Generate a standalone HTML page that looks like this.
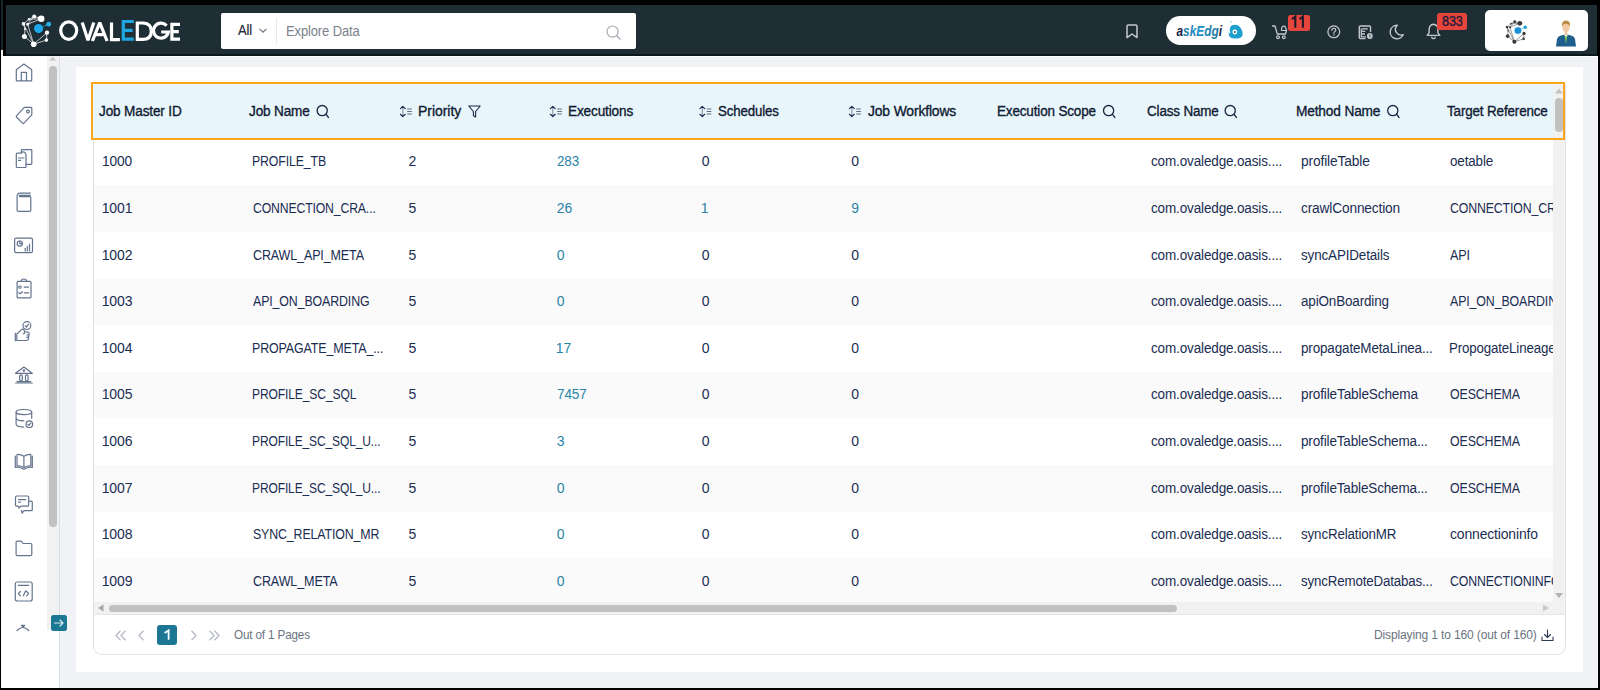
<!DOCTYPE html><html><head><meta charset="utf-8"><title>OvalEdge Jobs</title><style>
*{box-sizing:border-box;margin:0;padding:0}
html,body{width:1600px;height:690px;overflow:hidden;background:#000;font-family:"Liberation Sans",sans-serif;position:relative}
.a{position:absolute}
.t{position:absolute;white-space:nowrap;line-height:1}
svg{position:absolute;overflow:visible}
</style></head><body>
<div class="a" style="left:5.6px;top:5px;width:1591.4px;height:48.8px;background:#1f2d34"></div>
<div class="a" style="left:5.6px;top:53.8px;width:1591.4px;height:1.8px;background:#0b181d"></div>
<div class="a" style="left:0.9px;top:0;width:2.4px;height:50px;background:#17262c"></div>
<div class="a" style="left:0.9px;top:50px;width:2.4px;height:6px;background:#f4f4f4"></div>
<div class="a" style="left:1px;top:55.6px;width:1597.3px;height:632.4px;background:#f0f2f5"></div>
<div class="a" style="left:1px;top:55.6px;width:1597.3px;height:1.6px;background:#fff"></div>
<div class="a" style="left:1px;top:55.6px;width:59px;height:632.4px;background:#fff;border-right:1px solid #d9dde4"></div>
<div class="a" style="left:47px;top:55.6px;width:12px;height:574.4px;background:#f1f1f1"></div>
<div class="a" style="left:49px;top:66px;width:7.5px;height:461px;background:#c1c1c1;border-radius:4px"></div>
<svg style="left:47px;top:55px" width="12" height="8"><path d="M2.3 5.6 L5.75 1.8 L9.2 5.6Z" fill="#c1c1c1"/></svg>
<div class="a" style="left:76px;top:67.3px;width:1507px;height:604.7px;background:#fff"></div>
<div class="a" style="left:93px;top:84px;width:1473px;height:571px;border:1px solid #dfe3e8;border-top:none;border-radius:0 0 9px 9px"></div>
<div class="a" style="left:94px;top:138.80px;width:1459px;height:46.60px;background:#fff"></div>
<div class="a" style="left:94px;top:185.40px;width:1459px;height:46.60px;background:#fafafb"></div>
<div class="a" style="left:94px;top:232.00px;width:1459px;height:46.60px;background:#fff"></div>
<div class="a" style="left:94px;top:278.60px;width:1459px;height:46.60px;background:#fafafb"></div>
<div class="a" style="left:94px;top:325.20px;width:1459px;height:46.60px;background:#fff"></div>
<div class="a" style="left:94px;top:371.80px;width:1459px;height:46.60px;background:#fafafb"></div>
<div class="a" style="left:94px;top:418.40px;width:1459px;height:46.60px;background:#fff"></div>
<div class="a" style="left:94px;top:465.00px;width:1459px;height:46.60px;background:#fafafb"></div>
<div class="a" style="left:94px;top:511.60px;width:1459px;height:46.60px;background:#fff"></div>
<div class="a" style="left:94px;top:558.20px;width:1459px;height:46.60px;background:#fafafb"></div>
<div class="a" style="left:0;top:0;width:1553px;height:690px;overflow:hidden">
<div class="t" style="left:101.72px;top:154.45px;font-size:14px;color:#1a2d52;letter-spacing:-0.150px;font-weight:normal;transform:scaleX(0.9797);transform-origin:0 0">1000</div>
<div class="t" style="left:251.62px;top:154.45px;font-size:14px;color:#1a2d52;letter-spacing:-0.150px;font-weight:normal;transform:scaleX(0.8807);transform-origin:0 0">PROFILE_TB</div>
<div class="t" style="left:408.60px;top:154.45px;font-size:14px;color:#1a2d52;letter-spacing:-0.100px;font-weight:normal">2</div>
<div class="t" style="left:556.80px;top:154.45px;font-size:14px;color:#2a84a6;letter-spacing:-0.150px;font-weight:normal;transform:scaleX(0.9582);transform-origin:0 0">283</div>
<div class="t" style="left:701.80px;top:154.45px;font-size:14px;color:#1a2d52;letter-spacing:-0.100px;font-weight:normal">0</div>
<div class="t" style="left:851.30px;top:154.45px;font-size:14px;color:#1a2d52;letter-spacing:-0.100px;font-weight:normal">0</div>
<div class="t" style="left:1150.80px;top:154.45px;font-size:14px;color:#1a2d52;letter-spacing:-0.150px;font-weight:normal;transform:scaleX(0.9648);transform-origin:0 0">com.ovaledge.oasis....</div>
<div class="t" style="left:1300.70px;top:154.45px;font-size:14px;color:#1a2d52;letter-spacing:-0.150px;font-weight:normal;transform:scaleX(0.9834);transform-origin:0 0">profileTable</div>
<div class="t" style="left:1450.40px;top:154.45px;font-size:14px;color:#1a2d52;letter-spacing:-0.150px;font-weight:normal;transform:scaleX(0.9592);transform-origin:0 0">oetable</div>
<div class="t" style="left:101.70px;top:201.05px;font-size:14px;color:#1a2d52;letter-spacing:-0.100px;font-weight:normal">1001</div>
<div class="t" style="left:252.50px;top:201.05px;font-size:14px;color:#1a2d52;letter-spacing:-0.150px;font-weight:normal;transform:scaleX(0.8725);transform-origin:0 0">CONNECTION_CRA...</div>
<div class="t" style="left:408.60px;top:201.05px;font-size:14px;color:#1a2d52;letter-spacing:-0.100px;font-weight:normal">5</div>
<div class="t" style="left:556.80px;top:201.05px;font-size:14px;color:#2a84a6;letter-spacing:-0.100px;font-weight:normal">26</div>
<div class="t" style="left:700.80px;top:201.05px;font-size:14px;color:#2a84a6;letter-spacing:-0.100px;font-weight:normal">1</div>
<div class="t" style="left:851.30px;top:201.05px;font-size:14px;color:#2a84a6;letter-spacing:-0.100px;font-weight:normal">9</div>
<div class="t" style="left:1150.80px;top:201.05px;font-size:14px;color:#1a2d52;letter-spacing:-0.150px;font-weight:normal;transform:scaleX(0.9648);transform-origin:0 0">com.ovaledge.oasis....</div>
<div class="t" style="left:1300.70px;top:201.05px;font-size:14px;color:#1a2d52;letter-spacing:-0.150px;font-weight:normal;transform:scaleX(0.9780);transform-origin:0 0">crawlConnection</div>
<div class="t" style="left:1450.40px;top:201.05px;font-size:14px;color:#1a2d52;letter-spacing:-0.150px;font-weight:normal;transform:scaleX(0.8800);transform-origin:0 0">CONNECTION_CRAWL</div>
<div class="t" style="left:101.70px;top:247.65px;font-size:14px;color:#1a2d52;letter-spacing:-0.100px;font-weight:normal">1002</div>
<div class="t" style="left:252.50px;top:247.65px;font-size:14px;color:#1a2d52;letter-spacing:-0.150px;font-weight:normal;transform:scaleX(0.8947);transform-origin:0 0">CRAWL_API_META</div>
<div class="t" style="left:408.60px;top:247.65px;font-size:14px;color:#1a2d52;letter-spacing:-0.100px;font-weight:normal">5</div>
<div class="t" style="left:556.80px;top:247.65px;font-size:14px;color:#2a84a6;letter-spacing:-0.100px;font-weight:normal">0</div>
<div class="t" style="left:701.80px;top:247.65px;font-size:14px;color:#1a2d52;letter-spacing:-0.100px;font-weight:normal">0</div>
<div class="t" style="left:851.30px;top:247.65px;font-size:14px;color:#1a2d52;letter-spacing:-0.100px;font-weight:normal">0</div>
<div class="t" style="left:1150.80px;top:247.65px;font-size:14px;color:#1a2d52;letter-spacing:-0.150px;font-weight:normal;transform:scaleX(0.9648);transform-origin:0 0">com.ovaledge.oasis....</div>
<div class="t" style="left:1300.70px;top:247.65px;font-size:14px;color:#1a2d52;letter-spacing:-0.150px;font-weight:normal;transform:scaleX(0.9600);transform-origin:0 0">syncAPIDetails</div>
<div class="t" style="left:1450.40px;top:247.65px;font-size:14px;color:#1a2d52;letter-spacing:-0.150px;font-weight:normal;transform:scaleX(0.9000);transform-origin:0 0">API</div>
<div class="t" style="left:101.70px;top:294.25px;font-size:14px;color:#1a2d52;letter-spacing:-0.100px;font-weight:normal">1003</div>
<div class="t" style="left:252.50px;top:294.25px;font-size:14px;color:#1a2d52;letter-spacing:-0.150px;font-weight:normal;transform:scaleX(0.8852);transform-origin:0 0">API_ON_BOARDING</div>
<div class="t" style="left:408.60px;top:294.25px;font-size:14px;color:#1a2d52;letter-spacing:-0.100px;font-weight:normal">5</div>
<div class="t" style="left:556.80px;top:294.25px;font-size:14px;color:#2a84a6;letter-spacing:-0.100px;font-weight:normal">0</div>
<div class="t" style="left:701.80px;top:294.25px;font-size:14px;color:#1a2d52;letter-spacing:-0.100px;font-weight:normal">0</div>
<div class="t" style="left:851.30px;top:294.25px;font-size:14px;color:#1a2d52;letter-spacing:-0.100px;font-weight:normal">0</div>
<div class="t" style="left:1150.80px;top:294.25px;font-size:14px;color:#1a2d52;letter-spacing:-0.150px;font-weight:normal;transform:scaleX(0.9648);transform-origin:0 0">com.ovaledge.oasis....</div>
<div class="t" style="left:1300.70px;top:294.25px;font-size:14px;color:#1a2d52;letter-spacing:-0.150px;font-weight:normal;transform:scaleX(0.9600);transform-origin:0 0">apiOnBoarding</div>
<div class="t" style="left:1450.40px;top:294.25px;font-size:14px;color:#1a2d52;letter-spacing:-0.150px;font-weight:normal;transform:scaleX(0.8852);transform-origin:0 0">API_ON_BOARDING</div>
<div class="t" style="left:101.70px;top:340.85px;font-size:14px;color:#1a2d52;letter-spacing:-0.100px;font-weight:normal">1004</div>
<div class="t" style="left:251.61px;top:340.85px;font-size:14px;color:#1a2d52;letter-spacing:-0.150px;font-weight:normal;transform:scaleX(0.8902);transform-origin:0 0">PROPAGATE_META_...</div>
<div class="t" style="left:408.60px;top:340.85px;font-size:14px;color:#1a2d52;letter-spacing:-0.100px;font-weight:normal">5</div>
<div class="t" style="left:555.80px;top:340.85px;font-size:14px;color:#2a84a6;letter-spacing:-0.100px;font-weight:normal">17</div>
<div class="t" style="left:701.80px;top:340.85px;font-size:14px;color:#1a2d52;letter-spacing:-0.100px;font-weight:normal">0</div>
<div class="t" style="left:851.30px;top:340.85px;font-size:14px;color:#1a2d52;letter-spacing:-0.100px;font-weight:normal">0</div>
<div class="t" style="left:1150.80px;top:340.85px;font-size:14px;color:#1a2d52;letter-spacing:-0.150px;font-weight:normal;transform:scaleX(0.9648);transform-origin:0 0">com.ovaledge.oasis....</div>
<div class="t" style="left:1300.70px;top:340.85px;font-size:14px;color:#1a2d52;letter-spacing:-0.150px;font-weight:normal;transform:scaleX(0.9617);transform-origin:0 0">propagateMetaLinea...</div>
<div class="t" style="left:1449.45px;top:340.85px;font-size:14px;color:#1a2d52;letter-spacing:-0.150px;font-weight:normal;transform:scaleX(0.9500);transform-origin:0 0">PropogateLineage</div>
<div class="t" style="left:101.70px;top:387.45px;font-size:14px;color:#1a2d52;letter-spacing:-0.100px;font-weight:normal">1005</div>
<div class="t" style="left:251.64px;top:387.45px;font-size:14px;color:#1a2d52;letter-spacing:-0.150px;font-weight:normal;transform:scaleX(0.8627);transform-origin:0 0">PROFILE_SC_SQL</div>
<div class="t" style="left:408.60px;top:387.45px;font-size:14px;color:#1a2d52;letter-spacing:-0.100px;font-weight:normal">5</div>
<div class="t" style="left:556.80px;top:387.45px;font-size:14px;color:#2a84a6;letter-spacing:-0.150px;font-weight:normal;transform:scaleX(0.9706);transform-origin:0 0">7457</div>
<div class="t" style="left:701.80px;top:387.45px;font-size:14px;color:#1a2d52;letter-spacing:-0.100px;font-weight:normal">0</div>
<div class="t" style="left:851.30px;top:387.45px;font-size:14px;color:#1a2d52;letter-spacing:-0.100px;font-weight:normal">0</div>
<div class="t" style="left:1150.80px;top:387.45px;font-size:14px;color:#1a2d52;letter-spacing:-0.150px;font-weight:normal;transform:scaleX(0.9648);transform-origin:0 0">com.ovaledge.oasis....</div>
<div class="t" style="left:1300.70px;top:387.45px;font-size:14px;color:#1a2d52;letter-spacing:-0.150px;font-weight:normal;transform:scaleX(0.9716);transform-origin:0 0">profileTableSchema</div>
<div class="t" style="left:1450.40px;top:387.45px;font-size:14px;color:#1a2d52;letter-spacing:-0.150px;font-weight:normal;transform:scaleX(0.8854);transform-origin:0 0">OESCHEMA</div>
<div class="t" style="left:101.70px;top:434.05px;font-size:14px;color:#1a2d52;letter-spacing:-0.100px;font-weight:normal">1006</div>
<div class="t" style="left:251.64px;top:434.05px;font-size:14px;color:#1a2d52;letter-spacing:-0.150px;font-weight:normal;transform:scaleX(0.8586);transform-origin:0 0">PROFILE_SC_SQL_U...</div>
<div class="t" style="left:408.60px;top:434.05px;font-size:14px;color:#1a2d52;letter-spacing:-0.100px;font-weight:normal">5</div>
<div class="t" style="left:556.80px;top:434.05px;font-size:14px;color:#2a84a6;letter-spacing:-0.100px;font-weight:normal">3</div>
<div class="t" style="left:701.80px;top:434.05px;font-size:14px;color:#1a2d52;letter-spacing:-0.100px;font-weight:normal">0</div>
<div class="t" style="left:851.30px;top:434.05px;font-size:14px;color:#1a2d52;letter-spacing:-0.100px;font-weight:normal">0</div>
<div class="t" style="left:1150.80px;top:434.05px;font-size:14px;color:#1a2d52;letter-spacing:-0.150px;font-weight:normal;transform:scaleX(0.9648);transform-origin:0 0">com.ovaledge.oasis....</div>
<div class="t" style="left:1300.70px;top:434.05px;font-size:14px;color:#1a2d52;letter-spacing:-0.150px;font-weight:normal;transform:scaleX(0.9638);transform-origin:0 0">profileTableSchema...</div>
<div class="t" style="left:1450.40px;top:434.05px;font-size:14px;color:#1a2d52;letter-spacing:-0.150px;font-weight:normal;transform:scaleX(0.8854);transform-origin:0 0">OESCHEMA</div>
<div class="t" style="left:101.70px;top:480.65px;font-size:14px;color:#1a2d52;letter-spacing:-0.100px;font-weight:normal">1007</div>
<div class="t" style="left:251.64px;top:480.65px;font-size:14px;color:#1a2d52;letter-spacing:-0.150px;font-weight:normal;transform:scaleX(0.8586);transform-origin:0 0">PROFILE_SC_SQL_U...</div>
<div class="t" style="left:408.60px;top:480.65px;font-size:14px;color:#1a2d52;letter-spacing:-0.100px;font-weight:normal">5</div>
<div class="t" style="left:556.80px;top:480.65px;font-size:14px;color:#2a84a6;letter-spacing:-0.100px;font-weight:normal">0</div>
<div class="t" style="left:701.80px;top:480.65px;font-size:14px;color:#1a2d52;letter-spacing:-0.100px;font-weight:normal">0</div>
<div class="t" style="left:851.30px;top:480.65px;font-size:14px;color:#1a2d52;letter-spacing:-0.100px;font-weight:normal">0</div>
<div class="t" style="left:1150.80px;top:480.65px;font-size:14px;color:#1a2d52;letter-spacing:-0.150px;font-weight:normal;transform:scaleX(0.9648);transform-origin:0 0">com.ovaledge.oasis....</div>
<div class="t" style="left:1300.70px;top:480.65px;font-size:14px;color:#1a2d52;letter-spacing:-0.150px;font-weight:normal;transform:scaleX(0.9638);transform-origin:0 0">profileTableSchema...</div>
<div class="t" style="left:1450.40px;top:480.65px;font-size:14px;color:#1a2d52;letter-spacing:-0.150px;font-weight:normal;transform:scaleX(0.8854);transform-origin:0 0">OESCHEMA</div>
<div class="t" style="left:101.70px;top:527.25px;font-size:14px;color:#1a2d52;letter-spacing:-0.100px;font-weight:normal">1008</div>
<div class="t" style="left:252.50px;top:527.25px;font-size:14px;color:#1a2d52;letter-spacing:-0.150px;font-weight:normal;transform:scaleX(0.8841);transform-origin:0 0">SYNC_RELATION_MR</div>
<div class="t" style="left:408.60px;top:527.25px;font-size:14px;color:#1a2d52;letter-spacing:-0.100px;font-weight:normal">5</div>
<div class="t" style="left:556.80px;top:527.25px;font-size:14px;color:#2a84a6;letter-spacing:-0.100px;font-weight:normal">0</div>
<div class="t" style="left:701.80px;top:527.25px;font-size:14px;color:#1a2d52;letter-spacing:-0.100px;font-weight:normal">0</div>
<div class="t" style="left:851.30px;top:527.25px;font-size:14px;color:#1a2d52;letter-spacing:-0.100px;font-weight:normal">0</div>
<div class="t" style="left:1150.80px;top:527.25px;font-size:14px;color:#1a2d52;letter-spacing:-0.150px;font-weight:normal;transform:scaleX(0.9648);transform-origin:0 0">com.ovaledge.oasis....</div>
<div class="t" style="left:1300.70px;top:527.25px;font-size:14px;color:#1a2d52;letter-spacing:-0.150px;font-weight:normal;transform:scaleX(0.9553);transform-origin:0 0">syncRelationMR</div>
<div class="t" style="left:1450.40px;top:527.25px;font-size:14px;color:#1a2d52;letter-spacing:-0.150px;font-weight:normal;transform:scaleX(0.9960);transform-origin:0 0">connectioninfo</div>
<div class="t" style="left:101.70px;top:573.85px;font-size:14px;color:#1a2d52;letter-spacing:-0.100px;font-weight:normal">1009</div>
<div class="t" style="left:252.50px;top:573.85px;font-size:14px;color:#1a2d52;letter-spacing:-0.150px;font-weight:normal;transform:scaleX(0.8970);transform-origin:0 0">CRAWL_META</div>
<div class="t" style="left:408.60px;top:573.85px;font-size:14px;color:#1a2d52;letter-spacing:-0.100px;font-weight:normal">5</div>
<div class="t" style="left:556.80px;top:573.85px;font-size:14px;color:#2a84a6;letter-spacing:-0.100px;font-weight:normal">0</div>
<div class="t" style="left:701.80px;top:573.85px;font-size:14px;color:#1a2d52;letter-spacing:-0.100px;font-weight:normal">0</div>
<div class="t" style="left:851.30px;top:573.85px;font-size:14px;color:#1a2d52;letter-spacing:-0.100px;font-weight:normal">0</div>
<div class="t" style="left:1150.80px;top:573.85px;font-size:14px;color:#1a2d52;letter-spacing:-0.150px;font-weight:normal;transform:scaleX(0.9648);transform-origin:0 0">com.ovaledge.oasis....</div>
<div class="t" style="left:1300.70px;top:573.85px;font-size:14px;color:#1a2d52;letter-spacing:-0.150px;font-weight:normal;transform:scaleX(0.9501);transform-origin:0 0">syncRemoteDatabas...</div>
<div class="t" style="left:1450.40px;top:573.85px;font-size:14px;color:#1a2d52;letter-spacing:-0.150px;font-weight:normal;transform:scaleX(0.8800);transform-origin:0 0">CONNECTIONINFO</div>
</div>
<div class="a" style="left:91px;top:82px;width:1474px;height:58px;background:#e8f6fc;border:2px solid #fba51a"></div>
<div class="t" style="left:99.30px;top:103.85px;font-size:14px;color:#111b33;letter-spacing:-0.150px;font-weight:normal;-webkit-text-stroke:0.35px #111b33;transform:scaleX(0.9703);transform-origin:0 0">Job Master ID</div>
<div class="t" style="left:249.00px;top:103.85px;font-size:14px;color:#111b33;letter-spacing:-0.150px;font-weight:normal;-webkit-text-stroke:0.35px #111b33;transform:scaleX(0.9687);transform-origin:0 0">Job Name</div>
<div class="t" style="left:418.00px;top:103.85px;font-size:14px;color:#111b33;letter-spacing:-0.044px;font-weight:normal;-webkit-text-stroke:0.35px #111b33">Priority</div>
<div class="t" style="left:567.83px;top:103.85px;font-size:14px;color:#111b33;letter-spacing:-0.150px;font-weight:normal;-webkit-text-stroke:0.35px #111b33;transform:scaleX(0.9708);transform-origin:0 0">Executions</div>
<div class="t" style="left:718.40px;top:103.85px;font-size:14px;color:#111b33;letter-spacing:-0.150px;font-weight:normal;-webkit-text-stroke:0.35px #111b33;transform:scaleX(0.9474);transform-origin:0 0">Schedules</div>
<div class="t" style="left:868.00px;top:103.85px;font-size:14px;color:#111b33;letter-spacing:-0.150px;font-weight:normal;-webkit-text-stroke:0.35px #111b33;transform:scaleX(0.9919);transform-origin:0 0">Job Workflows</div>
<div class="t" style="left:997.04px;top:103.85px;font-size:14px;color:#111b33;letter-spacing:-0.150px;font-weight:normal;-webkit-text-stroke:0.35px #111b33;transform:scaleX(0.9620);transform-origin:0 0">Execution Scope</div>
<div class="t" style="left:1147.40px;top:103.85px;font-size:14px;color:#111b33;letter-spacing:-0.150px;font-weight:normal;-webkit-text-stroke:0.35px #111b33;transform:scaleX(0.9587);transform-origin:0 0">Class Name</div>
<div class="t" style="left:1296.32px;top:103.85px;font-size:14px;color:#111b33;letter-spacing:-0.150px;font-weight:normal;-webkit-text-stroke:0.35px #111b33;transform:scaleX(0.9773);transform-origin:0 0">Method Name</div>
<div class="t" style="left:1447.00px;top:103.85px;font-size:14px;color:#111b33;letter-spacing:-0.150px;font-weight:normal;-webkit-text-stroke:0.35px #111b33;transform:scaleX(0.9587);transform-origin:0 0">Target Reference</div>
<svg style="left:0;top:0" width="1" height="1"><circle cx="322.2" cy="110.6" r="5.1" fill="none" stroke="#1b2540" stroke-width="1.3"/><path d="M326.1 114.4 L328.4 117.4" stroke="#1b2540" stroke-width="1.4" stroke-linecap="round"/></svg>
<svg style="left:0;top:0" width="1" height="1"><circle cx="1108.6" cy="110.6" r="5.1" fill="none" stroke="#1b2540" stroke-width="1.3"/><path d="M1112.5 114.4 L1114.8 117.4" stroke="#1b2540" stroke-width="1.4" stroke-linecap="round"/></svg>
<svg style="left:0;top:0" width="1" height="1"><circle cx="1230.2" cy="110.6" r="5.1" fill="none" stroke="#1b2540" stroke-width="1.3"/><path d="M1234.1 114.4 L1236.4 117.4" stroke="#1b2540" stroke-width="1.4" stroke-linecap="round"/></svg>
<svg style="left:0;top:0" width="1" height="1"><circle cx="1392.8" cy="110.6" r="5.1" fill="none" stroke="#1b2540" stroke-width="1.3"/><path d="M1396.7 114.4 L1399.0 117.4" stroke="#1b2540" stroke-width="1.4" stroke-linecap="round"/></svg>
<svg style="left:0;top:0" width="1" height="1"><path d="M402.8 107 V116" stroke="#8f9bb0" stroke-width="1.2"/><path d="M400.4 108.6 L402.8 106.4 L405.2 108.6 M400.4 114.3 L402.8 116.5 L405.2 114.3" fill="none" stroke="#1b2a4a" stroke-width="1.2" stroke-linecap="round" stroke-linejoin="round"/><path d="M407.2 109 H411.8 M407.2 111.5 H411.8 M407.2 114 H411.8" stroke="#5f6b80" stroke-width="1.2"/></svg>
<svg style="left:0;top:0" width="1" height="1"><path d="M552.8 107 V116" stroke="#8f9bb0" stroke-width="1.2"/><path d="M550.4 108.6 L552.8 106.4 L555.2 108.6 M550.4 114.3 L552.8 116.5 L555.2 114.3" fill="none" stroke="#1b2a4a" stroke-width="1.2" stroke-linecap="round" stroke-linejoin="round"/><path d="M557.2 109 H561.8 M557.2 111.5 H561.8 M557.2 114 H561.8" stroke="#5f6b80" stroke-width="1.2"/></svg>
<svg style="left:0;top:0" width="1" height="1"><path d="M702.3 107 V116" stroke="#8f9bb0" stroke-width="1.2"/><path d="M699.9 108.6 L702.3 106.4 L704.7 108.6 M699.9 114.3 L702.3 116.5 L704.7 114.3" fill="none" stroke="#1b2a4a" stroke-width="1.2" stroke-linecap="round" stroke-linejoin="round"/><path d="M706.7 109 H711.3 M706.7 111.5 H711.3 M706.7 114 H711.3" stroke="#5f6b80" stroke-width="1.2"/></svg>
<svg style="left:0;top:0" width="1" height="1"><path d="M851.8 107 V116" stroke="#8f9bb0" stroke-width="1.2"/><path d="M849.4 108.6 L851.8 106.4 L854.2 108.6 M849.4 114.3 L851.8 116.5 L854.2 114.3" fill="none" stroke="#1b2a4a" stroke-width="1.2" stroke-linecap="round" stroke-linejoin="round"/><path d="M856.2 109 H860.8 M856.2 111.5 H860.8 M856.2 114 H860.8" stroke="#5f6b80" stroke-width="1.2"/></svg>
<svg style="left:467.5px;top:105px" width="13" height="13" viewBox="0 0 13 13"><path d="M0.8 1 H12.2 L7.6 6.5 V12 L5.4 10.8 V6.5 Z" fill="none" stroke="#1b2540" stroke-width="1.1" stroke-linejoin="round"/></svg>
<div class="a" style="left:1553px;top:84px;width:12px;height:530px;background:#f1f1f1"></div>
<div class="a" style="left:1555px;top:98px;width:8px;height:34px;background:#c1c1c1;border-radius:4px"></div>
<svg style="left:1553px;top:86px" width="12" height="9"><path d="M2 7.5 L6 2.5 L10 7.5Z" fill="#c1c1c1"/></svg>
<svg style="left:1553px;top:591px" width="12" height="9"><path d="M2 2 L6 7 L10 2Z" fill="#b3b3b3"/></svg>
<div class="a" style="left:1563px;top:82px;width:2px;height:58px;background:#fba51a"></div>
<div class="a" style="left:1550px;top:138px;width:15px;height:2px;background:#fba51a"></div>
<div class="a" style="left:94px;top:602px;width:1471px;height:12px;background:#f1f1f1"></div>
<div class="a" style="left:109px;top:604.5px;width:1068px;height:7px;background:#c1c1c1;border-radius:4px"></div>
<svg style="left:95px;top:602px" width="10" height="12"><path d="M8.5 2.5 L3 6 L8.5 9.5Z" fill="#a8a8a8"/></svg>
<svg style="left:1541px;top:602px" width="10" height="12"><path d="M2 2.5 L8 6 L2 9.5Z" fill="#c8c8c8"/></svg>
<div class="a" style="left:94px;top:614px;width:1471px;height:1px;background:#e3e6ea"></div>
<svg style="left:115px;top:630px" width="12" height="11" viewBox="0 0 12 11"><path d="M5.5 0.8 L1 5.5 L5.5 10.2 M10.5 0.8 L6 5.5 L10.5 10.2" fill="none" stroke="#b5bac3" stroke-width="1.3"/></svg>
<svg style="left:136.5px;top:630px" width="8" height="11" viewBox="0 0 8 11"><path d="M6.5 0.8 L2 5.5 L6.5 10.2" fill="none" stroke="#b5bac3" stroke-width="1.3"/></svg>
<div class="a" style="left:157.3px;top:625.3px;width:19.6px;height:19.5px;background:#1c7795;border-radius:3px"></div>
<svg style="left:0;top:0" width="1" height="1"><path d="M168.6 639.8 V630.4 L164.6 632.9" fill="none" stroke="#fff" stroke-width="1.75"/></svg>
<svg style="left:189.5px;top:630px" width="8" height="11" viewBox="0 0 8 11"><path d="M1.5 0.8 L6 5.5 L1.5 10.2" fill="none" stroke="#b5bac3" stroke-width="1.3"/></svg>
<svg style="left:208px;top:630px" width="12" height="11" viewBox="0 0 12 11"><path d="M1.5 0.8 L6 5.5 L1.5 10.2 M6.5 0.8 L11 5.5 L6.5 10.2" fill="none" stroke="#b5bac3" stroke-width="1.3"/></svg>
<div class="t" style="left:234.20px;top:628.72px;font-size:12.5px;color:#6b7280;letter-spacing:-0.150px;font-weight:normal;transform:scaleX(0.9337);transform-origin:0 0">Out of 1 Pages</div>
<div class="t" style="left:1373.54px;top:628.92px;font-size:12.5px;color:#6b7280;letter-spacing:-0.150px;font-weight:normal;transform:scaleX(0.9633);transform-origin:0 0">Displaying 1 to 160 (out of 160)</div>
<svg style="left:1541px;top:629px" width="13" height="13" viewBox="0 0 13 13"><path d="M6.5 1 V8.5 M3.5 5.5 L6.5 8.5 L9.5 5.5 M1 8 V11.5 H12 V8" fill="none" stroke="#2e3a55" stroke-width="1.1" stroke-linecap="round" stroke-linejoin="round"/></svg>
<svg style="left:18.0px;top:10.0px" width="40" height="40" viewBox="0 0 40 40"><line x1="16.2" y1="6.4" x2="23.2" y2="8.7" stroke="#e8e8ee" stroke-width="0.8"/><line x1="11" y1="9.3" x2="23.2" y2="8.7" stroke="#e8e8ee" stroke-width="0.8"/><line x1="11" y1="9.3" x2="16.2" y2="6.4" stroke="#e8e8ee" stroke-width="0.8"/><line x1="5.5" y1="13.9" x2="11" y2="9.3" stroke="#e8e8ee" stroke-width="0.8"/><line x1="9.6" y1="14.2" x2="16.2" y2="6.4" stroke="#e8e8ee" stroke-width="0.8"/><line x1="9.6" y1="14.2" x2="23.2" y2="8.7" stroke="#e8e8ee" stroke-width="0.8"/><line x1="5.5" y1="13.9" x2="15.7" y2="34.2" stroke="#e8e8ee" stroke-width="0.8"/><line x1="9.6" y1="14.2" x2="15.7" y2="34.2" stroke="#e8e8ee" stroke-width="0.8"/><line x1="7" y1="19" x2="6.4" y2="26.4" stroke="#e8e8ee" stroke-width="0.8"/><line x1="5.5" y1="13.9" x2="7" y2="19" stroke="#e8e8ee" stroke-width="0.8"/><line x1="6.4" y1="26.4" x2="15.7" y2="34.2" stroke="#e8e8ee" stroke-width="0.8"/><line x1="15.7" y1="34.2" x2="28.4" y2="30.1" stroke="#e8e8ee" stroke-width="0.8"/><line x1="29" y1="22.6" x2="28.4" y2="30.1" stroke="#e8e8ee" stroke-width="0.8"/><line x1="15.7" y1="34.2" x2="29" y2="22.6" stroke="#e8e8ee" stroke-width="0.8"/><line x1="20.6" y1="18.6" x2="30.7" y2="14.2" stroke="#27b0e6" stroke-width="0.8"/><circle cx="23.2" cy="8.7" r="3.3" fill="#fff"/><circle cx="16.2" cy="6.4" r="2.0" fill="#fff"/><circle cx="5.5" cy="13.9" r="1.8" fill="#fff"/><circle cx="6.4" cy="26.4" r="2.5" fill="#fff"/><circle cx="15.7" cy="34.2" r="2.8" fill="#fff"/><circle cx="29" cy="22.6" r="2.2" fill="#fff"/><circle cx="28.4" cy="30.1" r="1.8" fill="#fff"/><circle cx="11" cy="9.3" r="1.2" fill="#fff"/><circle cx="9.6" cy="14.2" r="1.5" fill="#fff"/><circle cx="7.0" cy="19" r="1.0" fill="#fff"/><circle cx="20.6" cy="18.6" r="5.6" fill="#16232b" opacity="0.7"/><circle cx="20.6" cy="18.6" r="4.6" fill="#1ea7e8"/><circle cx="30.7" cy="14.2" r="2.4" fill="#27b0e6"/></svg>
<svg style="left:0;top:0" width="1" height="1"><g fill="none" stroke="#fff" stroke-width="3.2"><ellipse cx="68.7" cy="30.55" rx="8" ry="8.75"/><path d="M82.2 22.4 L88 40.2 L93.8 22.4" stroke-linejoin="bevel"/><path d="M92.4 41 L99.75 22.6 L107.1 41 M95.2 34.6 H104.3" stroke-linejoin="bevel"/><path d="M111.5 22.6 V39.6 H119.9"/><path d="M137.3 23 V39.3 H142.5 Q151.3 39.3 151.3 31.15 Q151.3 23 142.5 23 Z"/><path d="M166.6 25.6 A7.5 7.5 0 1 0 168.4 32 H161.2"/><path d="M180 24.3 H171.9 V39.2 H180 M171.9 31.6 H178.8"/></g><path d="M133.8 21.5 H123.3 V39.2 H133.8 M123.3 30.4 H132.6" fill="none" stroke="#1da6e2" stroke-width="3.2"/></svg>
<div class="a" style="left:221px;top:13px;width:415px;height:36px;background:#fff;border-radius:2px"></div>
<div class="t" style="left:238.30px;top:23.25px;font-size:14px;color:#1d2939;letter-spacing:-0.150px;font-weight:normal;-webkit-text-stroke:0.20px #1d2939;transform:scaleX(0.9242);transform-origin:0 0">All</div>
<svg style="left:258px;top:27px" width="10" height="7" viewBox="0 0 10 7"><path d="M1.5 1.8 L5 5.2 L8.5 1.8" fill="none" stroke="#6b7280" stroke-width="1.1"/></svg>
<div class="a" style="left:276px;top:18px;width:1px;height:26px;background:#e6e8eb"></div>
<div class="t" style="left:285.97px;top:24.05px;font-size:14px;color:#7b828c;letter-spacing:-0.150px;font-weight:normal;transform:scaleX(0.9300);transform-origin:0 0">Explore Data</div>
<svg style="left:605.5px;top:24.5px" width="15" height="15" viewBox="0 0 15 15"><circle cx="6.6" cy="6.6" r="5.6" fill="none" stroke="#a3a9b1" stroke-width="1.2"/><path d="M10.8 10.8 L14 14" stroke="#a3a9b1" stroke-width="1.3" stroke-linecap="round"/></svg>
<svg style="left:1125px;top:24px" width="14" height="15" viewBox="0 0 14 15"><path d="M2 2.2 Q2 1 3.2 1 H10.8 Q12 1 12 2.2 V13.6 L7 10 L2 13.6 Z" fill="none" stroke="#c2c7cb" stroke-width="1.5" stroke-linejoin="round"/></svg>
<div class="a" style="left:1166px;top:16.4px;width:90px;height:28.4px;background:#fff;border-radius:14.2px"></div>
<svg style="left:1176px;top:20px" width="50" height="20"><defs><linearGradient id="ag" x1="0" x2="1"><stop offset="0" stop-color="#1b6f9e"/><stop offset="0.5" stop-color="#1b8fc2"/><stop offset="1" stop-color="#1b6a98"/></linearGradient></defs><text x="0.5" y="16" font-family="Liberation Sans" font-size="14.5" font-style="italic" font-weight="bold" textLength="45.5" lengthAdjust="spacingAndGlyphs" fill="url(#ag)"><tspan fill="#1b1f48">a</tspan>skEdg<tspan fill="#1b1f48">i</tspan></text></svg>
<svg style="left:1227px;top:20px" width="18" height="20" viewBox="0 0 18 20"><circle cx="4" cy="1.8" r="0.8" fill="#7cc7e2"/><path d="M3 9 Q3 4.8 8 4.8 Q12.5 4.8 14.5 9.5 Q16.8 14.5 14.5 17 Q13 18.6 8 18.6 Q2.8 18.6 1.8 15 Q1 12.5 3 9Z" fill="#1ea0cf"/><circle cx="7.8" cy="12" r="2.4" fill="#fff"/><circle cx="7.8" cy="12" r="1.1" fill="#3b6b5c"/><circle cx="2.6" cy="11.2" r="0.7" fill="#fff"/><circle cx="2.6" cy="12.8" r="0.7" fill="#fff"/></svg>
<svg style="left:1271px;top:23px" width="18" height="17" viewBox="0 0 18 17"><path d="M1.5 3 H4 L6.3 11 H14.5 L15.5 7" fill="none" stroke="#c2c7cb" stroke-width="1.3" stroke-linejoin="round" stroke-linecap="round"/><circle cx="7" cy="14.3" r="1.4" fill="none" stroke="#c2c7cb" stroke-width="1.2"/><circle cx="12.8" cy="14.3" r="1.4" fill="none" stroke="#c2c7cb" stroke-width="1.2"/><path d="M10.5 7.5 Q10.5 3.2 12.8 3.2 Q15.1 3.2 15.1 7.5Z" fill="none" stroke="#c2c7cb" stroke-width="1.2"/></svg>
<div class="a" style="left:1287.5px;top:14.8px;width:22px;height:16px;background:#e5453b;border-radius:2.5px"></div>
<svg style="left:0;top:0" width="1" height="1"><path d="M1295.3 27.7 V16.7 L1292 19.2 M1302.9 27.7 V16.7 L1299.6 19.2" fill="none" stroke="#1e1a2a" stroke-width="2.1" stroke-linejoin="miter"/></svg>
<svg style="left:1327px;top:25px" width="14" height="14" viewBox="0 0 14 14"><circle cx="6.8" cy="6.8" r="5.9" fill="none" stroke="#c2c7cb" stroke-width="1.3"/><path d="M4.9 5.3 Q4.9 3.4 6.9 3.4 Q8.8 3.4 8.8 5.1 Q8.8 6.3 7.6 6.8 Q6.9 7.2 6.9 8.3" fill="none" stroke="#c2c7cb" stroke-width="1.2" stroke-linecap="round"/><circle cx="6.9" cy="10.1" r="0.75" fill="#c2c7cb"/></svg>
<svg style="left:1358px;top:24.5px" width="16" height="15" viewBox="0 0 16 15"><path d="M12.5 7 V2 Q12.5 1 11.5 1 H2.5 Q1.3 1 1.3 2.2 V12.6 Q1.3 13.6 2.3 13.6 H7.5" fill="none" stroke="#c2c7cb" stroke-width="1.4"/><path d="M3.8 3.8 H9.8 M3.8 6.4 H7.3 M3.8 9 H7" stroke="#c2c7cb" stroke-width="1.3"/><path d="M3.3 3.8 V11.8 H8" fill="none" stroke="#c2c7cb" stroke-width="1.3"/><circle cx="11.8" cy="11" r="2.9" fill="#c2c7cb"/><path d="M11.8 9.3 V11.3 L12.9 12" stroke="#1f2d34" stroke-width="0.8" fill="none"/></svg>
<svg style="left:1387.5px;top:23px" width="18" height="18" viewBox="0 0 24 24"><path d="M12 3c.132 0 .263 0 .393 0a7.5 7.5 0 0 0 7.92 12.446a9 9 0 1 1 -8.313 -12.454z" fill="none" stroke="#c2c7cb" stroke-width="1.9" stroke-linejoin="round"/></svg>
<svg style="left:1426px;top:22.5px" width="15" height="17" viewBox="0 0 15 17"><path d="M7.5 1.3 Q3.3 1.8 3.1 6.5 V9.8 L1.2 12.4 H13.8 L11.9 9.8 V6.5 Q11.7 1.8 7.5 1.3Z" fill="none" stroke="#c2c7cb" stroke-width="1.4" stroke-linejoin="round"/><path d="M5.6 13.6 Q5.8 15.7 7.5 15.7 Q9.2 15.7 9.4 13.6" fill="none" stroke="#c2c7cb" stroke-width="1.3"/></svg>
<div class="a" style="left:1437.3px;top:12.8px;width:29.3px;height:17.7px;background:#e5453b;border-radius:2.5px"></div>
<div class="t" style="left:1441.70px;top:13.93px;font-size:14.5px;color:#1e1a3a;letter-spacing:-0.150px;font-weight:normal;-webkit-text-stroke:0.35px #1e1a3a;transform:scaleX(0.8687);transform-origin:0 0">833</div>
<div class="a" style="left:1485px;top:10.3px;width:103px;height:40.8px;background:#fff;border-radius:5px"></div>
<svg style="left:1503.0px;top:16.5px" width="29" height="29" viewBox="0 0 40 40"><line x1="16.2" y1="6.4" x2="23.2" y2="8.7" stroke="#555" stroke-width="0.8"/><line x1="11" y1="9.3" x2="23.2" y2="8.7" stroke="#555" stroke-width="0.8"/><line x1="11" y1="9.3" x2="16.2" y2="6.4" stroke="#555" stroke-width="0.8"/><line x1="5.5" y1="13.9" x2="11" y2="9.3" stroke="#555" stroke-width="0.8"/><line x1="9.6" y1="14.2" x2="16.2" y2="6.4" stroke="#555" stroke-width="0.8"/><line x1="9.6" y1="14.2" x2="23.2" y2="8.7" stroke="#555" stroke-width="0.8"/><line x1="5.5" y1="13.9" x2="15.7" y2="34.2" stroke="#555" stroke-width="0.8"/><line x1="9.6" y1="14.2" x2="15.7" y2="34.2" stroke="#555" stroke-width="0.8"/><line x1="7" y1="19" x2="6.4" y2="26.4" stroke="#555" stroke-width="0.8"/><line x1="5.5" y1="13.9" x2="7" y2="19" stroke="#555" stroke-width="0.8"/><line x1="6.4" y1="26.4" x2="15.7" y2="34.2" stroke="#555" stroke-width="0.8"/><line x1="15.7" y1="34.2" x2="28.4" y2="30.1" stroke="#555" stroke-width="0.8"/><line x1="29" y1="22.6" x2="28.4" y2="30.1" stroke="#555" stroke-width="0.8"/><line x1="15.7" y1="34.2" x2="29" y2="22.6" stroke="#555" stroke-width="0.8"/><line x1="20.6" y1="18.6" x2="30.7" y2="14.2" stroke="#1fa3e0" stroke-width="0.8"/><circle cx="23.2" cy="8.7" r="3.3" fill="#3a3a3a"/><circle cx="16.2" cy="6.4" r="2.0" fill="#3a3a3a"/><circle cx="5.5" cy="13.9" r="1.8" fill="#3a3a3a"/><circle cx="6.4" cy="26.4" r="2.5" fill="#3a3a3a"/><circle cx="15.7" cy="34.2" r="2.8" fill="#3a3a3a"/><circle cx="29" cy="22.6" r="2.2" fill="#3a3a3a"/><circle cx="28.4" cy="30.1" r="1.8" fill="#3a3a3a"/><circle cx="11" cy="9.3" r="1.2" fill="#3a3a3a"/><circle cx="9.6" cy="14.2" r="1.5" fill="#3a3a3a"/><circle cx="7.0" cy="19" r="1.0" fill="#3a3a3a"/><circle cx="20.6" cy="18.6" r="5.6" fill="#bfe3f5" opacity="0.7"/><circle cx="20.6" cy="18.6" r="4.6" fill="#1d8fd8"/><circle cx="30.7" cy="14.2" r="2.4" fill="#1fa3e0"/></svg>
<svg style="left:1554px;top:18px" width="24" height="30" viewBox="0 0 24 30"><path d="M2 28.6 L3 21 Q3.6 18.5 7 17.6 L10 16.8 H14 L17 17.6 Q20.4 18.5 21 21 L22 28.6Z" fill="#1f5f8c"/><path d="M10.6 16.8 L12 26 L13.4 16.8Z" fill="#8bc34a"/><path d="M10 16.8 L12 19 L14 16.8Z" fill="#e8f5e9"/><ellipse cx="12" cy="9.5" rx="3.6" ry="4.6" fill="#f3c9a4"/><rect x="10.6" y="13" width="2.8" height="4" fill="#f3c9a4"/><path d="M8 9 Q7.2 2.8 12 2.6 Q16.8 2.8 16 9 Q15.5 6 12 5.8 Q8.5 6 8 9Z" fill="#b98a3e"/></svg>
<svg style="left:0;top:0" width="47" height="690" viewBox="0 0 47 690"><g fill="none" stroke="#64738e" stroke-width="1.2" stroke-linecap="round" stroke-linejoin="round"><path d="M16.3 80.2 V69.8 L23.9 64 L31.7 69.8 V80.2 Q31.7 80.8 31.1 80.8 H16.9 Q16.3 80.8 16.3 80.2Z M21.3 80.8 V72.4 H26.5 V80.8"/><path d="M24.3 107.4 H31 Q31.8 107.4 31.8 108.2 V114.8 L23.7 123.4 Q23.2 123.9 22.7 123.4 L16.4 117 Q15.9 116.3 16.4 115.8 Z"/><circle cx="28" cy="111.5" r="1.4"/><path d="M21.4 152.5 V150.3 Q21.4 149.6 22.1 149.6 H31.1 Q31.8 149.6 31.8 150.3 V163.6 Q31.8 164.3 31.1 164.3 H26"/><path d="M16.3 154 Q16.3 153.1 17.2 153.1 H21.5 Q23 151 24.5 152.3 Q26 153.5 26 155 V166.8 Q26 167.5 25.3 167.5 H17 Q16.3 167.5 16.3 166.8Z"/><path d="M18.5 158 H24 M18.5 160.4 H20.6"/><path d="M17.1 196.5 Q17.1 193.1 20 193.1 H30.4 M19.5 195.4 H30.4 M17.1 196.5 V210.2 Q17.1 211.4 18.3 211.4 H29.6 Q30.8 211.4 30.8 210.2 V197.7 Q30.8 196.6 29.6 196.6 H19.5"/><rect x="14.6" y="238.1" width="17.9" height="14.6" rx="1.6"/><circle cx="19.8" cy="243.6" r="2.6"/><path d="M19.8 241 V243.6 H22.4 M25.2 251 V248.3 M27.3 251 V246.3 M29.5 251 V244.2"/><rect x="17.1" y="281.4" width="13.9" height="16.5" rx="1"/><path d="M21.2 281.4 Q21.2 279 23.9 279 Q26.6 279 26.6 281.4"/><rect x="19.1" y="286.1" width="2" height="2" stroke-width="1"/><path d="M24.2 287.1 H28.6 M18.9 292.7 L20.1 293.8 L22.3 291.7 M24.2 292.8 H28.6"/><circle cx="26.9" cy="325.6" r="3.9"/><path d="M25.2 325.8 L26.4 327 L28.5 324.4"/><path d="M15.3 333.2 V340.8 M16.8 334 L21.5 329.6 Q23 328.5 24 330 L24.5 331.5 L28.6 332.4 Q29.6 333 29 334.4 L28.4 338.9 Q28 340.5 26.6 340.5 H16.8 Z M24.5 331.5 Q24.8 333.5 23.4 333.8 M28.9 335 H26.8 M28.6 337.2 H26.8"/><path d="M15.5 373.3 L23.9 367.1 L32.3 373.3 Z M15.6 383 H32.3 M17 381.6 H30.8"/><rect x="19.7" y="374.9" width="2.6" height="6" rx="1.1"/><rect x="25.5" y="374.9" width="2.6" height="6" rx="1.1"/><circle cx="23.9" cy="370.6" r="0.7"/><ellipse cx="23.9" cy="412.1" rx="7.8" ry="2.6"/><path d="M16.1 412.1 V424.2 Q16.3 426.8 23.6 427.1 M31.7 412.1 V418.2 M16.1 418.2 Q17 420.8 23.9 420.9"/><circle cx="29.3" cy="424.2" r="3.3"/><path d="M27.8 424.3 L28.9 425.4 L30.8 423.2"/><path d="M15.3 456 V467.5 Q19.5 466.5 23.9 469.3 Q28.3 466.5 32.3 467.5 V456 M17 454.5 Q20.5 454.2 23.9 456.3 Q27.4 454.2 30.8 454.5 V466 Q27.4 465.6 23.9 467.5 Q20.5 465.6 17 466 Z M23.9 456.3 V467.5"/><path d="M16.8 496 H27.4 Q28.7 496 28.7 497.3 V504.9 Q28.7 506.2 27.4 506.2 H20.8 L19.1 508.2 L18.5 506.2 H16.8 Q15.5 506.2 15.5 504.9 V497.3 Q15.5 496 16.8 496Z M18.6 499.6 H25.7 M18.6 502.1 H20.6 M28.7 501.1 H31 Q32.3 501.1 32.3 502.4 V509.4 Q32.3 510.7 31 510.7 H24 L22.2 513.2 L21.3 510.3"/><path d="M16.1 542.3 Q16.1 541.1 17.3 541.1 H21.2 L23.1 543.5 H30.6 Q31.8 543.5 31.8 544.7 V554.4 Q31.8 555.6 30.6 555.6 H17.3 Q16.1 555.6 16.1 554.4Z"/><rect x="15.3" y="582" width="16.9" height="19" rx="2"/><path d="M18.3 585.4 H28.7 M20.4 591.5 L18.3 593.6 L20.4 595.8 M23.4 595.8 L25.6 590.9 M26.6 591.5 L28.7 593.6 L26.6 595.8"/><path d="M17 630.5 Q23 624.5 28.7 630.5 M21.4 625.3 H24.6 L23 627.2Z"/></g></svg>
<div class="a" style="left:51px;top:614.5px;width:16px;height:16px;background:#1c7795;border-radius:2.5px"></div>
<svg style="left:51px;top:614.5px" width="16" height="16" viewBox="0 0 16 16"><path d="M3.5 8 H12 M9 5 L12 8 L9 11" fill="none" stroke="#d5e9f0" stroke-width="1.2" stroke-linecap="round" stroke-linejoin="round"/></svg>
</body></html>
